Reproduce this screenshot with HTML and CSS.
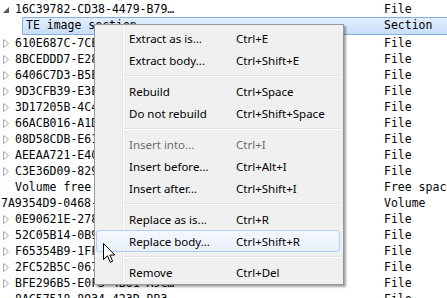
FILE: index.html
```html
<!DOCTYPE html>
<html lang="en">
<head>
    <meta charset="UTF-8">
    <title>Volume tree</title>
    <meta name="viewport" content="width=device-width, initial-scale=1.0">
    <link rel="stylesheet" href="styles.css">
</head>
<body>
    <!-- tree view -->
    <div class="tree">
        <div class="row"><span class="exp open"><svg width="6" height="6" viewBox="0 0 6 6"><path d="M6 0 L6 6 L0 6 Z" fill="#595959"/></svg></span><span class="name">16C39782-CD38-4479-B79…</span><span class="type">File</span></div>
        <div class="row sel"><span class="name">TE image section</span><span class="type">Section</span></div>
        <div class="row"><span class="exp"><svg width="6" height="9" viewBox="0 0 6 9"><path d="M0.5 0.5 L5.5 4.5 L0.5 8.5 Z" fill="none" stroke="#a6a6a6"/></svg></span><span class="name">610E687C-7CE4-4E2B-A1D…</span><span class="type">File</span></div>
        <div class="row"><span class="exp"><svg width="6" height="9" viewBox="0 0 6 9"><path d="M0.5 0.5 L5.5 4.5 L0.5 8.5 Z" fill="none" stroke="#a6a6a6"/></svg></span><span class="name">8BCEDDD7-E28A-4F1C-9B0…</span><span class="type">File</span></div>
        <div class="row"><span class="exp"><svg width="6" height="9" viewBox="0 0 6 9"><path d="M0.5 0.5 L5.5 4.5 L0.5 8.5 Z" fill="none" stroke="#a6a6a6"/></svg></span><span class="name">6406C7D3-B5E1-4A7F-8C2…</span><span class="type">File</span></div>
        <div class="row"><span class="exp"><svg width="6" height="9" viewBox="0 0 6 9"><path d="M0.5 0.5 L5.5 4.5 L0.5 8.5 Z" fill="none" stroke="#a6a6a6"/></svg></span><span class="name">9D3CFB39-E3E2-4C61-B57…</span><span class="type">File</span></div>
        <div class="row"><span class="exp"><svg width="6" height="9" viewBox="0 0 6 9"><path d="M0.5 0.5 L5.5 4.5 L0.5 8.5 Z" fill="none" stroke="#a6a6a6"/></svg></span><span class="name">3D17205B-4C4A-4E8D-93F…</span><span class="type">File</span></div>
        <div class="row"><span class="exp"><svg width="6" height="9" viewBox="0 0 6 9"><path d="M0.5 0.5 L5.5 4.5 L0.5 8.5 Z" fill="none" stroke="#a6a6a6"/></svg></span><span class="name">66ACB016-A1D2-4B9E-B15…</span><span class="type">File</span></div>
        <div class="row"><span class="exp"><svg width="6" height="9" viewBox="0 0 6 9"><path d="M0.5 0.5 L5.5 4.5 L0.5 8.5 Z" fill="none" stroke="#a6a6a6"/></svg></span><span class="name">08D58CDB-E61D-4F08-A44…</span><span class="type">File</span></div>
        <div class="row"><span class="exp"><svg width="6" height="9" viewBox="0 0 6 9"><path d="M0.5 0.5 L5.5 4.5 L0.5 8.5 Z" fill="none" stroke="#a6a6a6"/></svg></span><span class="name">AEEAA721-E40C-4B3A-8E6…</span><span class="type">File</span></div>
        <div class="row"><span class="exp"><svg width="6" height="9" viewBox="0 0 6 9"><path d="M0.5 0.5 L5.5 4.5 L0.5 8.5 Z" fill="none" stroke="#a6a6a6"/></svg></span><span class="name">C3E36D09-829F-4D7B-A01…</span><span class="type">File</span></div>
        <div class="row"><span class="exp"></span><span class="name">Volume free space</span><span class="type">Free space</span></div>
        <div class="row root"><span class="name">7A9354D9-0468-444A-81C…</span><span class="type">Volume</span></div>
        <div class="row"><span class="exp"><svg width="6" height="9" viewBox="0 0 6 9"><path d="M0.5 0.5 L5.5 4.5 L0.5 8.5 Z" fill="none" stroke="#a6a6a6"/></svg></span><span class="name">0E90621E-2787-4F39-B0A…</span><span class="type">File</span></div>
        <div class="row"><span class="exp"><svg width="6" height="9" viewBox="0 0 6 9"><path d="M0.5 0.5 L5.5 4.5 L0.5 8.5 Z" fill="none" stroke="#a6a6a6"/></svg></span><span class="name">52C05B14-0B9E-4C3D-9A7…</span><span class="type">File</span></div>
        <div class="row"><span class="exp"><svg width="6" height="9" viewBox="0 0 6 9"><path d="M0.5 0.5 L5.5 4.5 L0.5 8.5 Z" fill="none" stroke="#a6a6a6"/></svg></span><span class="name">F65354B9-1FF8-4A2C-8E1…</span><span class="type">File</span></div>
        <div class="row"><span class="exp"><svg width="6" height="9" viewBox="0 0 6 9"><path d="M0.5 0.5 L5.5 4.5 L0.5 8.5 Z" fill="none" stroke="#a6a6a6"/></svg></span><span class="name">2FC52B5C-0674-4E5D-B3B…</span><span class="type">File</span></div>
        <div class="row"><span class="exp"><svg width="6" height="9" viewBox="0 0 6 9"><path d="M0.5 0.5 L5.5 4.5 L0.5 8.5 Z" fill="none" stroke="#a6a6a6"/></svg></span><span class="name">BFE296B5-E0F3-4B61-A9C…</span><span class="type">File</span></div>
        <div class="row"><span class="exp"></span><span class="name">8AC57518-8934-423D-BB3…</span><span class="type">File</span></div>
    </div>

    <!-- context menu -->
    <div class="menu">
        <div class="item"><span class="label">Extract as is...</span><span class="key">Ctrl+E</span></div>
        <div class="item"><span class="label">Extract body...</span><span class="key">Ctrl+Shift+E</span></div>
        <div class="sep"></div>
        <div class="item"><span class="label">Rebuild</span><span class="key">Ctrl+Space</span></div>
        <div class="item"><span class="label">Do not rebuild</span><span class="key">Ctrl+Shift+Space</span></div>
        <div class="sep"></div>
        <div class="item disabled"><span class="label">Insert into...</span><span class="key">Ctrl+I</span></div>
        <div class="item"><span class="label">Insert before...</span><span class="key">Ctrl+Alt+I</span></div>
        <div class="item"><span class="label">Insert after...</span><span class="key">Ctrl+Shift+I</span></div>
        <div class="sep"></div>
        <div class="item"><span class="label">Replace as is...</span><span class="key">Ctrl+R</span></div>
        <div class="item hover"><span class="label">Replace body...</span><span class="key">Ctrl+Shift+R</span></div>
        <div class="sep"></div>
        <div class="item"><span class="label">Remove</span><span class="key">Ctrl+Del</span></div>
    </div>

    <!-- mouse pointer -->
    <svg class="cursor" width="13" height="21" viewBox="0 0 13 21">
        <path d="M0.5 0.5 L0.5 16.5 L4.5 12.8 L7.3 19.3 L9.6 18.3 L6.9 12 L11.8 12 Z" fill="#fff" stroke="#000" stroke-width="1" stroke-linejoin="round"/>
    </svg>
</body>
</html>
```

FILE: styles.css
```css
:root {
    --row-h: 16px;
    --menu-bg: #f0f0f0;
    --menu-border: #979797;
    --mono: 'DejaVu Sans Mono', monospace;
    --ui: 'Noto Sans', 'Open Sans', sans-serif;
}
body {
    margin: 0;
    background: #fff;
    overflow: hidden;
    width: 447px;
    height: 298px;
    position: relative;
}
/* Tree view */
.tree {
    padding-top: 1px;
    font-family: var(--mono);
    font-size: 11.5px;
    color: #000;
}
.row {
    display: flex;
    height: var(--row-h);
    line-height: var(--row-h);
    white-space: nowrap;
}
.exp {
    width: 15px;
    flex: none;
    display: flex;
    align-items: center;
    padding-left: 3px;
    box-sizing: border-box;
}
.exp.open {
    padding-left: 3px;
    padding-top: 1px;
}
.name {
    flex: 1;
    overflow: hidden;
}
.type {
    width: 63px;
    flex: none;
    overflow: hidden;
}
.row.root .name {
    padding-left: 1px;
}
.row.sel {
    margin-left: 22px;
    border: 1px solid #84acdd;
    border-right: none;
    border-radius: 2px 0 0 2px;
    background: linear-gradient(#e3eefc, #c7ddf9);
    line-height: 14px;
}
.row.sel .name {
    padding-left: 3px;
}
/* Context menu */
.menu {
    position: absolute;
    left: 94px;
    top: 24px;
    width: 250px;
    box-sizing: border-box;
    background: var(--menu-bg);
    border: 1px solid var(--menu-border);
    padding: 2px 3px 1px 1px;
    font-family: var(--ui);
    font-size: 11.5px;
    color: #000;
    box-shadow: 2px 2px 2px rgba(0, 0, 0, 0.35);
}
.menu:before {
    content: "";
    position: absolute;
    top: 2px;
    bottom: 2px;
    left: 27px;
    width: 1px;
    background: #e2e3e3;
    border-right: 1px solid #fff;
}
.item {
    display: flex;
    height: 22px;
    align-items: center;
    box-sizing: border-box;
    border: 1px solid transparent;
    border-radius: 3px;
    position: relative;
}
.item .label {
    width: 139px;
    padding-left: 32px;
    box-sizing: border-box;
    flex: none;
}
.item.disabled {
    color: #6d6d6d;
}
.item.hover {
    border-color: #aecff7;
    background: linear-gradient(#f5f8fd, #e9f0fa);
}
.sep {
    height: 9px;
    margin-left: 28px;
    position: relative;
}
.sep:after {
    content: "";
    position: absolute;
    left: 0;
    right: 0;
    top: 4px;
    height: 1px;
    background: #e0e0e0;
    border-bottom: 1px solid #fff;
}
.cursor {
    position: absolute;
    left: 103px;
    top: 243px;
}
```
